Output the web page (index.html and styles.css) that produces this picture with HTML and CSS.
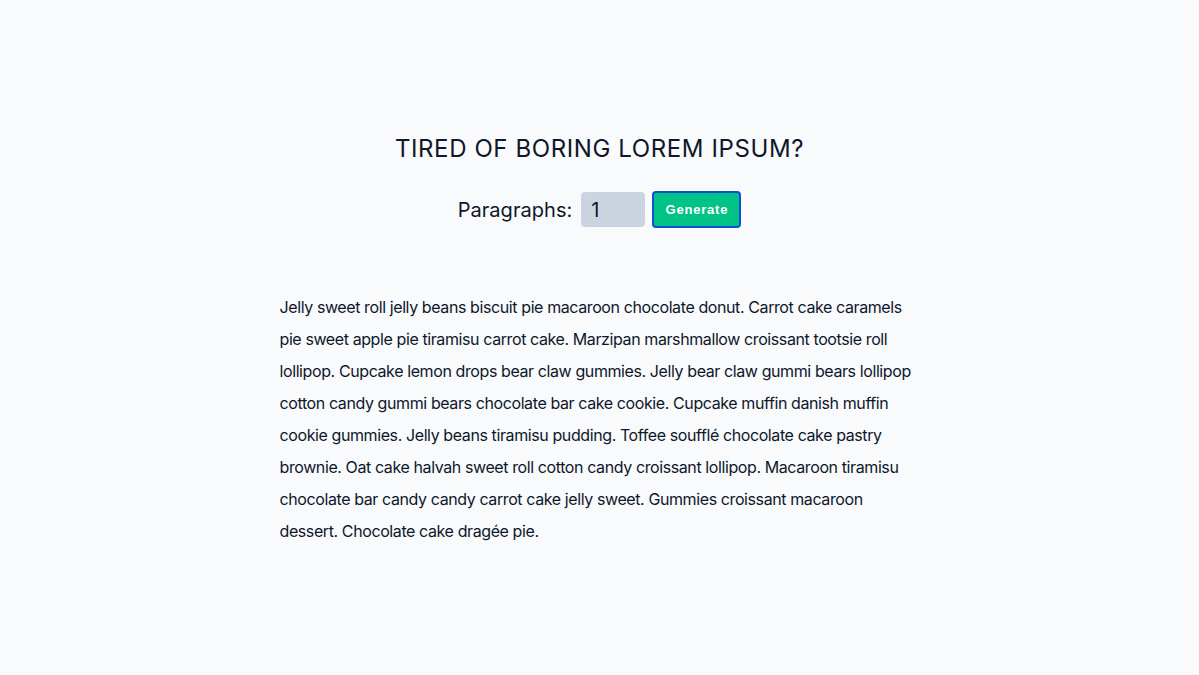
FILE: index.html
```html
<!DOCTYPE html>
<html lang="en">
<head>
<meta charset="utf-8">
<title>Lorem Ipsum Generator</title>
<link rel="stylesheet" href="styles.css">
</head>
<body>
<section class="section-center">
  <h3 class="title">Tired of boring lorem ipsum?</h3>
  <form class="lorem-form">
    <label for="amount" class="label">Paragraphs:</label>
    <input type="number" id="amount" name="amount" class="amount" value="1">
    <button type="submit" class="btn">Generate</button>
  </form>
  <article class="lorem-text">
    <p>Jelly sweet roll jelly beans biscuit pie macaroon chocolate donut. Carrot cake caramels pie sweet apple pie tiramisu carrot cake. Marzipan marshmallow croissant tootsie roll lollipop. Cupcake lemon drops bear claw gummies. Jelly bear claw gummi bears lollipop cotton candy gummi bears chocolate bar cake cookie. Cupcake muffin danish muffin cookie gummies. Jelly beans tiramisu pudding. Toffee soufflé chocolate cake pastry brownie. Oat cake halvah sweet roll cotton candy croissant lollipop. Macaroon tiramisu chocolate bar candy candy carrot cake jelly sweet. Gummies croissant macaroon dessert. Chocolate cake dragée pie.</p>
  </article>
</section>
</body>
</html>
```

FILE: styles.css
```css
* {
  margin: 0;
  padding: 0;
  box-sizing: border-box;
}
body {
  background: #f8fafc;
  color: #0f172a;
  font-family: Inter, "Noto Sans", sans-serif;
  line-height: 1.5;
  font-size: 16px;
}
.section-center {
  width: 90vw;
  max-width: 640px;
  margin: 0 auto;
  padding-top: 131px;
  text-align: center;
}
.title {
  font-size: 24px;
  font-weight: 400;
  text-transform: uppercase;
  letter-spacing: 0.6px;
  line-height: 36px;
}
.lorem-form {
  display: flex;
  justify-content: center;
  align-items: center;
  margin-top: 24px;
}
.label {
  font-size: 20px;
  letter-spacing: 0.05px;
  margin-right: 9px;
}
.amount {
  width: 64px;
  height: 35px;
  background: #cbd5e1;
  border: none;
  border-radius: 4px;
  padding: 0 10px;
  font-family: Inter, "Noto Sans", sans-serif;
  font-size: 20px;
  color: #0f172a;
  margin-right: 7px;
}
.btn {
  width: 89px;
  height: 37px;
  background: #00c385;
  color: #fff;
  border: 2px solid #0f4fd6;
  border-radius: 4px;
  font-family: "Liberation Sans", Arial, sans-serif;
  font-size: 13px;
  font-weight: 600;
  letter-spacing: 0.8px;
}
.lorem-text {
  margin-top: 63px;
  text-align: left;
}
.lorem-text p {
  line-height: 32px;
  letter-spacing: -0.4px;
}
```
